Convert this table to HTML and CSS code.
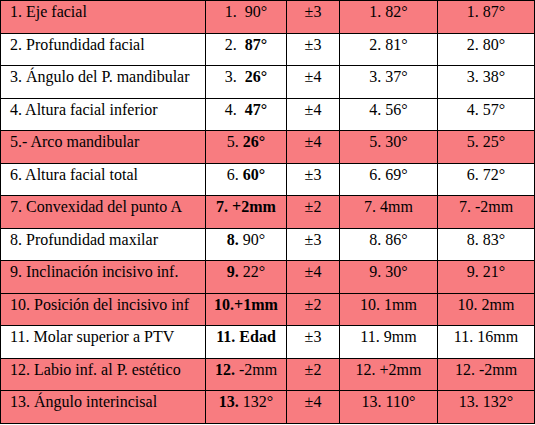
FILE: index.html
```html
<!DOCTYPE html>
<html>
<head>
<meta charset="utf-8">
<link rel="stylesheet" href="styles.css">
</head>
<body>
<table class="tbl">
<colgroup>
<col class="c1"><col class="c2"><col class="c3"><col class="c4"><col class="c5">
</colgroup>
<tr class="pink"><td>1. Eje facial</td><td>1.&nbsp; 90°</td><td>±3</td><td>1. 82°</td><td>1. 87°</td></tr>
<tr><td>2. Profundidad facial</td><td>2.&nbsp; <b>87°</b></td><td>±3</td><td>2. 81°</td><td>2. 80°</td></tr>
<tr><td>3. Ángulo del P. mandibular</td><td>3.&nbsp; <b>26°</b></td><td>±4</td><td>3. 37°</td><td>3. 38°</td></tr>
<tr><td>4. Altura facial inferior</td><td>4.&nbsp; <b>47°</b></td><td>±4</td><td>4. 56°</td><td>4. 57°</td></tr>
<tr class="pink"><td>5.- Arco mandibular</td><td>5. <b>26°</b></td><td>±4</td><td>5. 30°</td><td>5. 25°</td></tr>
<tr><td>6. Altura facial total</td><td>6. <b>60°</b></td><td>±3</td><td>6. 69°</td><td>6. 72°</td></tr>
<tr class="pink"><td>7. Convexidad del punto A</td><td><b>7. +2mm</b></td><td>±2</td><td>7. 4mm</td><td>7. -2mm</td></tr>
<tr><td>8. Profundidad maxilar</td><td><b>8.</b> 90°</td><td>±3</td><td>8. 86°</td><td>8. 83°</td></tr>
<tr class="pink"><td>9. Inclinación incisivo inf.</td><td><b>9.</b> 22°</td><td>±4</td><td>9. 30°</td><td>9. 21°</td></tr>
<tr class="pink"><td>10. Posición del incisivo inf</td><td><b>10.+1mm</b></td><td>±2</td><td>10. 1mm</td><td>10. 2mm</td></tr>
<tr><td>11. Molar superior a PTV</td><td><b>11. Edad</b></td><td>±3</td><td>11. 9mm</td><td>11. 16mm</td></tr>
<tr class="pink"><td>12. Labio inf. al P. estético</td><td><b>12.</b> -2mm</td><td>±2</td><td>12. +2mm</td><td>12. -2mm</td></tr>
<tr class="pink"><td>13. Ángulo interincisal</td><td><b>13.</b> 132°</td><td>±4</td><td>13. 110°</td><td>13. 132°</td></tr>
</table>
</body>
</html>
```
FILE: styles.css
```css
html, body {
  margin: 0;
  padding: 0;
  background: #ffffff;
}
.tbl {
  border-collapse: collapse;
  table-layout: fixed;
  width: 534px;
  height: 424px;
  font-family: "Liberation Serif", "Times New Roman", serif;
  font-size: 16px;
  color: #000;
}
.c1 { width: 205px; }
.c2 { width: 81px; }
.c3 { width: 53px; }
.c4 { width: 98px; }
.c5 { width: 97px; }
.tbl td {
  border: 1px solid #000;
  vertical-align: top;
  padding: 2px 2px 0 2px;
  text-align: center;
  white-space: nowrap;
  overflow: hidden;
  line-height: 18px;
}
.tbl td:first-child {
  text-align: left;
  padding-left: 9px;
}
.pink td {
  background: #f87c80;
}
```
